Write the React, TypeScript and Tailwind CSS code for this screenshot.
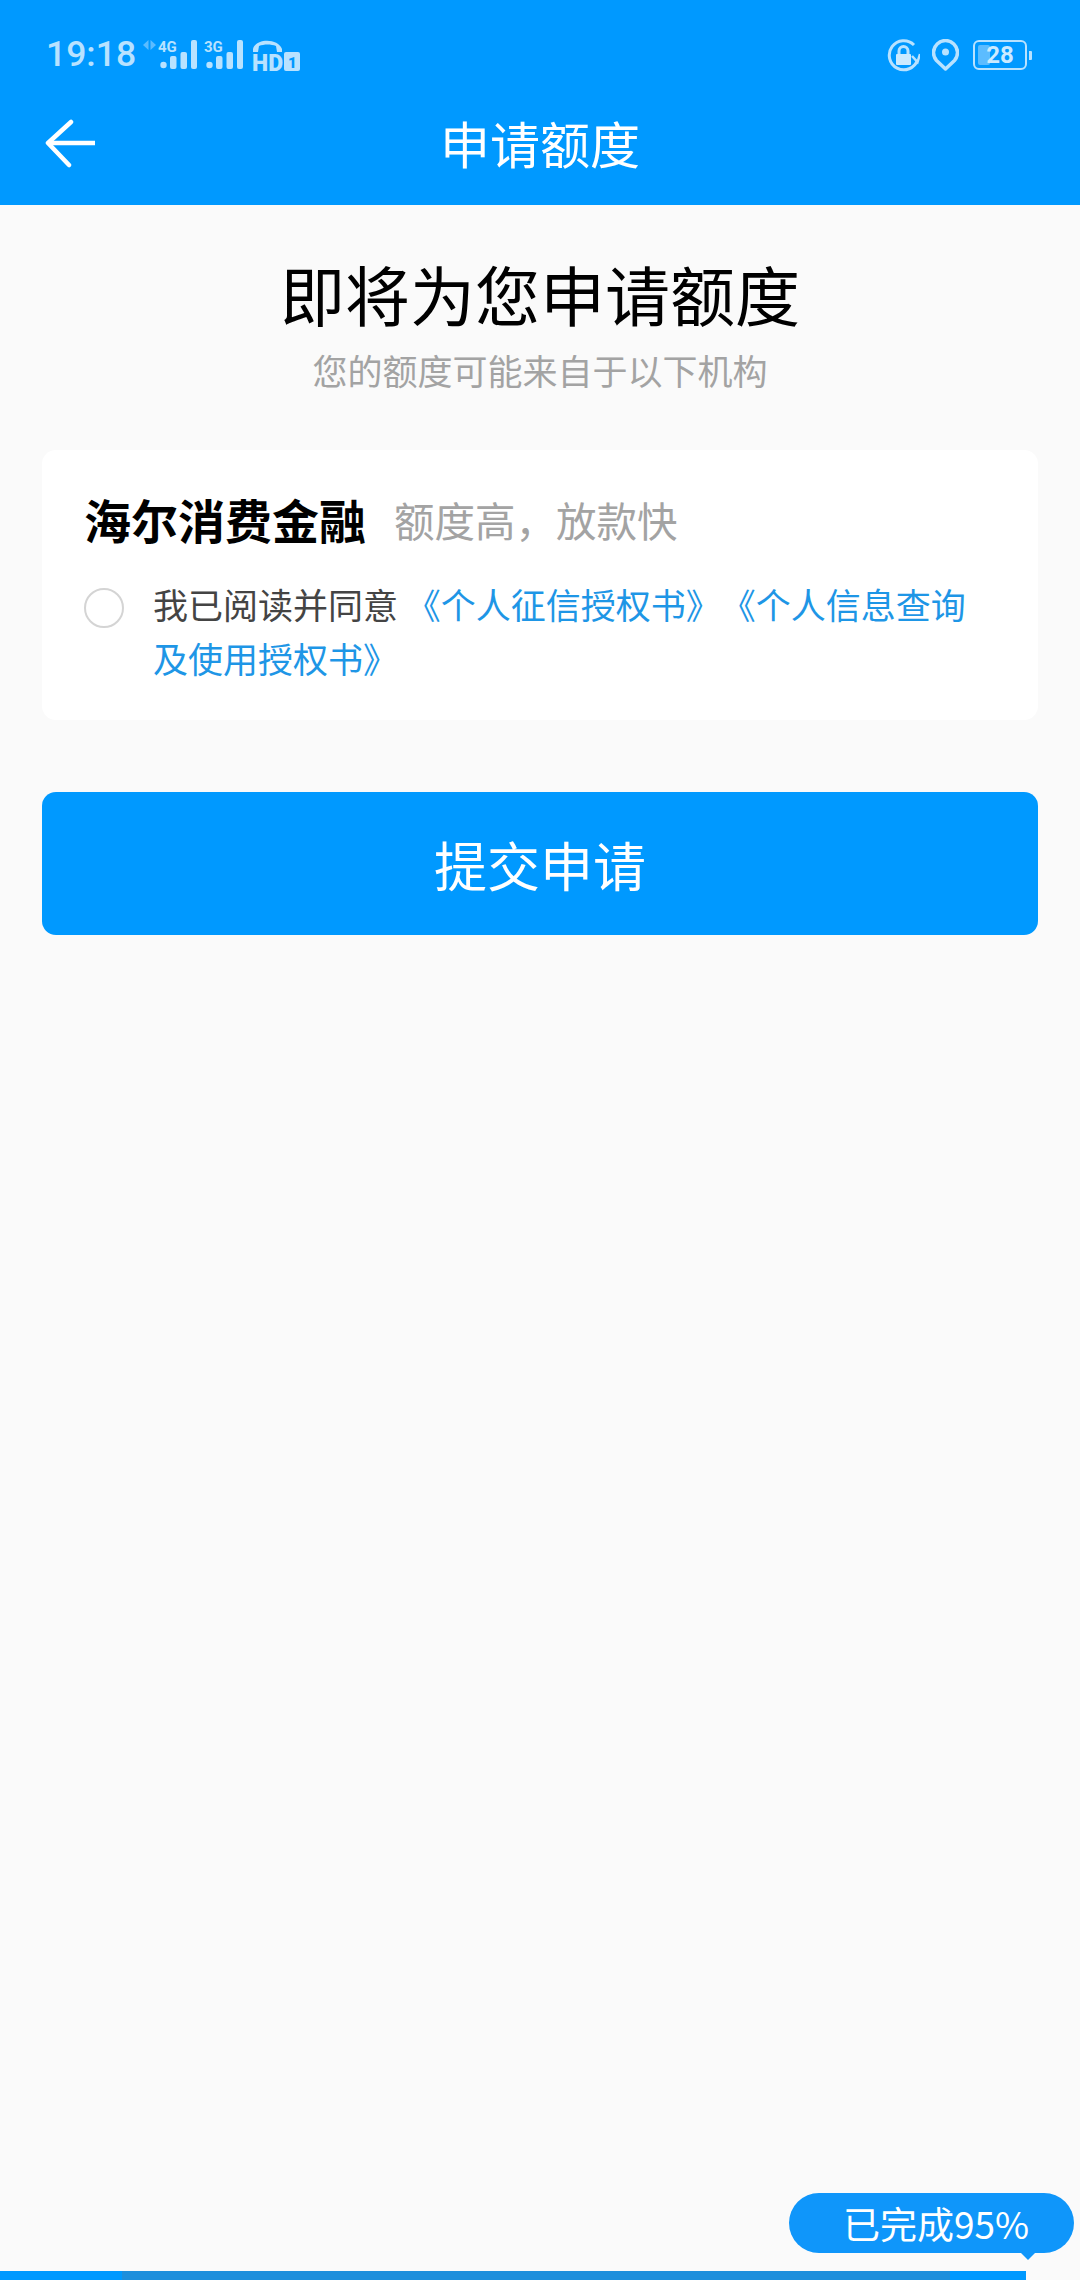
import React from 'react';

const cjk = { fontFamily: '"Noto Sans CJK SC", sans-serif' };

const SignalIcon = ({ label }: { label: string }) => (
  <svg width="37" height="30" viewBox="0 0 37 30" fill="#b8e2ff" className="overflow-visible">
    <text x="-2" y="12" fontSize="15" fontWeight="700" fontFamily="Roboto, sans-serif">{label}</text>
    <circle cx="3.5" cy="25" r="3.2" />
    <rect x="10" y="16" width="6.5" height="13" rx="2" />
    <rect x="20.5" y="12" width="6.5" height="17" rx="2" />
    <rect x="31" y="0" width="6" height="29" rx="2" />
  </svg>
);

const HdIcon = () => (
  <svg width="48" height="33" viewBox="0 0 48 33" fill="#b8e2ff" className="overflow-visible">
    <path d="M1 10 C4 -1 26 -1 30 10 L30 13 L25 13 L24 7 C19 5 12 5 7 7 L6 13 L1 13 Z" />
    <text x="0" y="32" fontSize="24" fontWeight="900" fontFamily="Roboto, sans-serif" textLength="31" lengthAdjust="spacingAndGlyphs">HD</text>
    <rect x="32" y="13" width="16" height="19" rx="2" />
    <text x="36" y="29" fontSize="15" fontWeight="900" fill="#0099ff" fontFamily="Roboto, sans-serif">1</text>
  </svg>
);

const LockIcon = () => (
  <svg width="33" height="33" viewBox="0 0 33 33" fill="none" stroke="#b8e2ff">
    <path d="M30.5 21 A14.5 14.5 0 1 1 27 6" strokeWidth="3" />
    <path d="M25 17 L30.5 23 L33 15" strokeWidth="2.5" />
    <rect x="9" y="15" width="15" height="11" rx="1" fill="#cbeaff" stroke="none" />
    <path d="M12 15 V12 A4.5 4.5 0 0 1 21 12 V15" strokeWidth="3" />
  </svg>
);

const PinIcon = () => (
  <svg width="27" height="32" viewBox="0 0 27 32" fill="none">
    <path d="M13.5 30 L4.5 21.5 A12 12 0 1 1 22.5 21.5 Z" stroke="#b8e2ff" strokeWidth="3.5" strokeLinejoin="round" />
    <circle cx="13.5" cy="13" r="3.5" fill="#b8e2ff" />
  </svg>
);

const BatteryIcon = () => (
  <div className="flex items-center">
    <div className="relative w-[54px] h-[30px] border-2 border-[#b8e2ff] rounded-[6px] flex items-center justify-center">
      <div className="absolute left-[3px] top-[3px] bottom-[3px] w-[12px] bg-[#5cbcff] rounded-[2px]"></div>
      <span className="relative text-[24px] font-bold text-[#cbeaff] leading-none" style={{ fontFamily: 'Roboto, sans-serif' }}>28</span>
    </div>
    <div className="w-[3px] h-[9px] ml-[2px] bg-[#b8e2ff] rounded-r-[1px]"></div>
  </div>
);

const BackArrow = () => (
  <svg width="52" height="50" viewBox="0 0 52 50" fill="none" stroke="#fff" strokeWidth="4.5" strokeLinecap="round" strokeLinejoin="round">
    <path d="M26 3 L3 24 L24 46" />
    <path d="M3 24 H50" strokeLinecap="butt" />
  </svg>
);

const App: React.FC = () => {
  return (
    <div className="w-[1080px] h-[2280px] bg-[#fafafa] flex flex-col overflow-hidden relative" style={cjk}>
      <div className="h-[205px] bg-[#0099ff] shrink-0">
        <div className="h-[110px] flex items-center justify-between pl-[46px] pr-[48px]">
          <div className="flex items-center">
            <span className="text-[35.5px] font-medium text-[#b8e2ff] leading-none" style={{ fontFamily: 'Roboto, sans-serif' }}>19:18</span>
            <div className="ml-[7px] mr-[4px] w-[13px] h-[30px] flex items-start">
              <svg width="13" height="10" viewBox="0 0 13 10" fill="#5cbcff">
                <path d="M5.5 0 V10 L0 5 Z" />
                <path d="M7.5 0 V10 L13 5 Z" />
              </svg>
            </div>
            <div className="flex items-center gap-[9px]">
              <SignalIcon label="4G" />
              <SignalIcon label="3G" />
              <HdIcon />
            </div>
          </div>
          <div className="flex items-center">
            <LockIcon />
            <div className="ml-[12px]"><PinIcon /></div>
            <div className="ml-[14px]"><BatteryIcon /></div>
          </div>
        </div>
        <div className="relative h-[64px] flex items-center justify-center">
          <div className="absolute left-[45px] top-[9px]"><BackArrow /></div>
          <h1 className="text-[50px] text-white leading-none font-normal">申请额度</h1>
        </div>
      </div>

      <div className="flex flex-col items-center pt-[50px]">
        <h2 className="text-[65px] text-black leading-[76px] font-normal">即将为您申请额度</h2>
        <p className="text-[35px] text-[#a3a3a3] leading-[44px] mt-[17px]">您的额度可能来自于以下机构</p>
      </div>

      <div className="mx-[42px] mt-[58px] h-[270px] bg-white rounded-[14px] pl-[42px] pr-[50px] pt-[38px]">
        <div className="flex items-center h-[60px]">
          <span className="text-[47px] font-bold text-black leading-none">海尔消费金融</span>
          <span className="text-[40.5px] text-[#a3a3a3] leading-none ml-[28px] mt-[4px]">额度高，放款快</span>
        </div>
        <div className="flex mt-[29px]">
          <div className="w-[40px] h-[40px] mt-[11px] rounded-full border-2 border-[#d4d4d4] shrink-0"></div>
          <p className="ml-[29px] text-[35px] leading-[54px] text-[#444444] [text-spacing-trim:space-all]">
            我已阅读并同意 <span className="text-[#1e96e6]">《个人征信授权书》《个人信息查询及使用授权书》</span>
          </p>
        </div>
      </div>

      <button className="mx-[42px] mt-[72px] h-[143px] pt-[2px] bg-[#0099ff] rounded-[14px] text-white text-[53px] leading-none flex items-center justify-center">
        提交申请
      </button>

      {/* progress bubble */}
      <div className="absolute left-[789px] top-[2193px] w-[285px] h-[60px] bg-[#0f96fa] rounded-[30px] text-white text-[37px] leading-none flex items-center pl-[54px]">
        已完成95%
        <div className="absolute left-[231px] bottom-[-7px] w-0 h-0 border-x-[8px] border-x-transparent border-t-[8px] border-t-[#0f96fa]"></div>
      </div>

      <div className="absolute left-0 bottom-0 w-[1026px] h-[9px] bg-[#0099ff] flex">
        <div className="ml-[122px] w-[828px] h-full bg-[#1e8fdc]"></div>
      </div>
    </div>
  );
};

export default App;
